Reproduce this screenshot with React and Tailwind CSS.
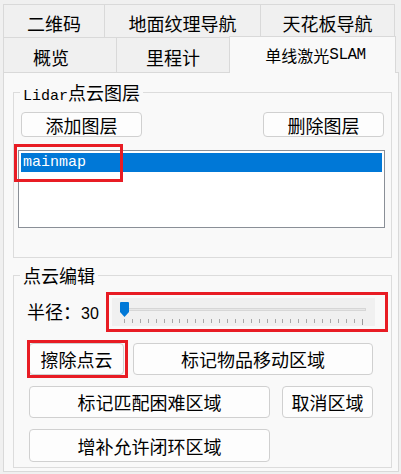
import React from 'react';

const cjk = "font-['Noto_Sans_CJK_SC','Noto_Sans',sans-serif]";
const mono = "font-['Liberation_Mono','DejaVu_Sans_Mono',monospace]";

const Button = ({ label, className }) => (
	<div
		className={`flex items-center justify-center rounded-[4px] border border-[#d0d0d0] bg-[#fdfdfd] text-[18px] leading-none text-black ${className}`}
	>
		{label}
	</div>
);

const Tab = ({ children, className }) => (
	<div className={`flex items-center justify-center border-t border-l border-[#d9d9d9] text-[18px] text-black ${className}`}>
		{children}
	</div>
);

const GroupTitle = ({ children }) => (
	<div className="-mt-[12px] ml-[6px] h-[22px] w-fit bg-[#f9f9f9] px-[3px] text-[18px] leading-[22px]">
		{children}
	</div>
);

const ticks = Array.from({ length: 31 }, (_, i) => i);

const App = () => {
	return (
		<div className={`relative h-[474px] w-[401px] overflow-hidden bg-[#f0f0f0] ${cjk}`}>
			{/* tab bar, two rows */}
			<div className="ml-[3px] mt-[4px] flex h-[33px]">
				<Tab className="w-[101px] pt-[5px]">二维码</Tab>
				<Tab className="w-[156px] pt-[5px]">地面纹理导航</Tab>
				<Tab className="w-[135px] border-r pt-[5px]">天花板导航</Tab>
			</div>
			<div className="ml-[3px] flex h-[35px] items-end">
				<Tab className="h-[35px] w-[113px] pr-[18px] pt-[4px]">概览</Tab>
				<Tab className="h-[35px] w-[113px] pt-[4px]">里程计</Tab>
				<Tab className="relative z-10 -mb-px h-[37px] w-[167px] items-baseline border-r bg-[#f9f9f9] pb-[6px] pl-[6px] pt-[6px]">
					<span className="text-[16px]">单线激光</span>
					<span className={`${mono} text-[16px] tracking-[-0.5px]`}>SLAM</span>
				</Tab>
			</div>

			<div className="ml-[3px] h-[400px] w-[396px] border border-[#d9d9d9] bg-[#f9f9f9] pl-[9px] pt-[19px]">
				{/* Lidar layers */}
				<div className="flex h-[166px] w-[379px] flex-col border border-[#dcdcdc]">
					<GroupTitle>
						<span className={`${mono} text-[15px]`}>Lidar</span>
						<span>点云图层</span>
					</GroupTitle>
					<div className="mt-[9px] flex justify-between px-[7px]">
						<Button label="添加图层" className="h-[25px] w-[121px]" />
						<Button label="删除图层" className="h-[25px] w-[121px]" />
					</div>
					<div className="ml-[4px] mr-[6px] mt-[13px] h-[78px] border border-[#8a8f97] bg-white p-[2px]">
						<div className={`${mono} h-[19px] bg-[#0078d7] pl-[2px] text-[15px] leading-[19px] text-white`}>mainmap</div>
					</div>
				</div>

				{/* point cloud edit */}
				<div className="mt-[17px] flex h-[193px] w-[379px] flex-col border border-[#dcdcdc]">
					<GroupTitle>点云编辑</GroupTitle>
					<div className="mt-[12px] flex h-[28px] items-center pl-[13px]">
						<div className="flex w-[85px] items-baseline">
							<span className="text-[18px]">半径：</span>
							<span className="font-['Liberation_Sans',sans-serif] text-[16px]">30</span>
						</div>
						<div className="relative h-[28px] w-[263px] bg-[#f0f0f0] pl-[8px] pt-[10px]">
							<div className="h-[3px] w-[246px] border border-[#d6d6d6] bg-[#e7e7e7]" />
							<div className="ml-[4px] mt-[8px] flex w-[239px] items-start justify-between">
								{ticks.map((t) => (
									<div key={t} className={t === 30 ? 'h-[6px] w-px bg-[#9a9a9a]' : 'h-[4px] w-px bg-[#a8a8a8]'} />
								))}
							</div>
							<svg className="absolute left-[8px] top-[4px]" width="9" height="15" viewBox="0 0 9 15">
								<path d="M1 0 H8 a1 1 0 0 1 1 1 V10 L4.5 15 L0 10 V1 a1 1 0 0 1 1 -1 Z" fill="#0078d7" />
							</svg>
						</div>
					</div>
					<div className="mt-[17px] flex flex-col gap-[11px] pl-[15px]">
						<div className="flex gap-[9px]">
							<Button label="擦除点云" className="h-[32px] w-[95px]" />
							<Button label="标记物品移动区域" className="h-[32px] w-[240px]" />
						</div>
						<div className="flex gap-[12px]">
							<Button label="标记匹配困难区域" className="h-[32px] w-[241px]" />
							<Button label="取消区域" className="h-[32px] w-[91px]" />
						</div>
						<div className="flex">
							<Button label="增补允许闭环区域" className="h-[33px] w-[241px]" />
						</div>
					</div>
				</div>
			</div>

			{/* red annotation boxes */}
			<div className="pointer-events-none absolute left-[14px] top-[144px] h-[38px] w-[109px] border-[3px] border-[#e81c24]" />
			<div className="pointer-events-none absolute left-[106px] top-[292px] h-[40px] w-[282px] border-[3px] border-[#e81c24]" />
			<div className="pointer-events-none absolute left-[27px] top-[340px] h-[38px] w-[101px] border-[3px] border-[#e81c24]" />
		</div>
	);
};

export default App;
